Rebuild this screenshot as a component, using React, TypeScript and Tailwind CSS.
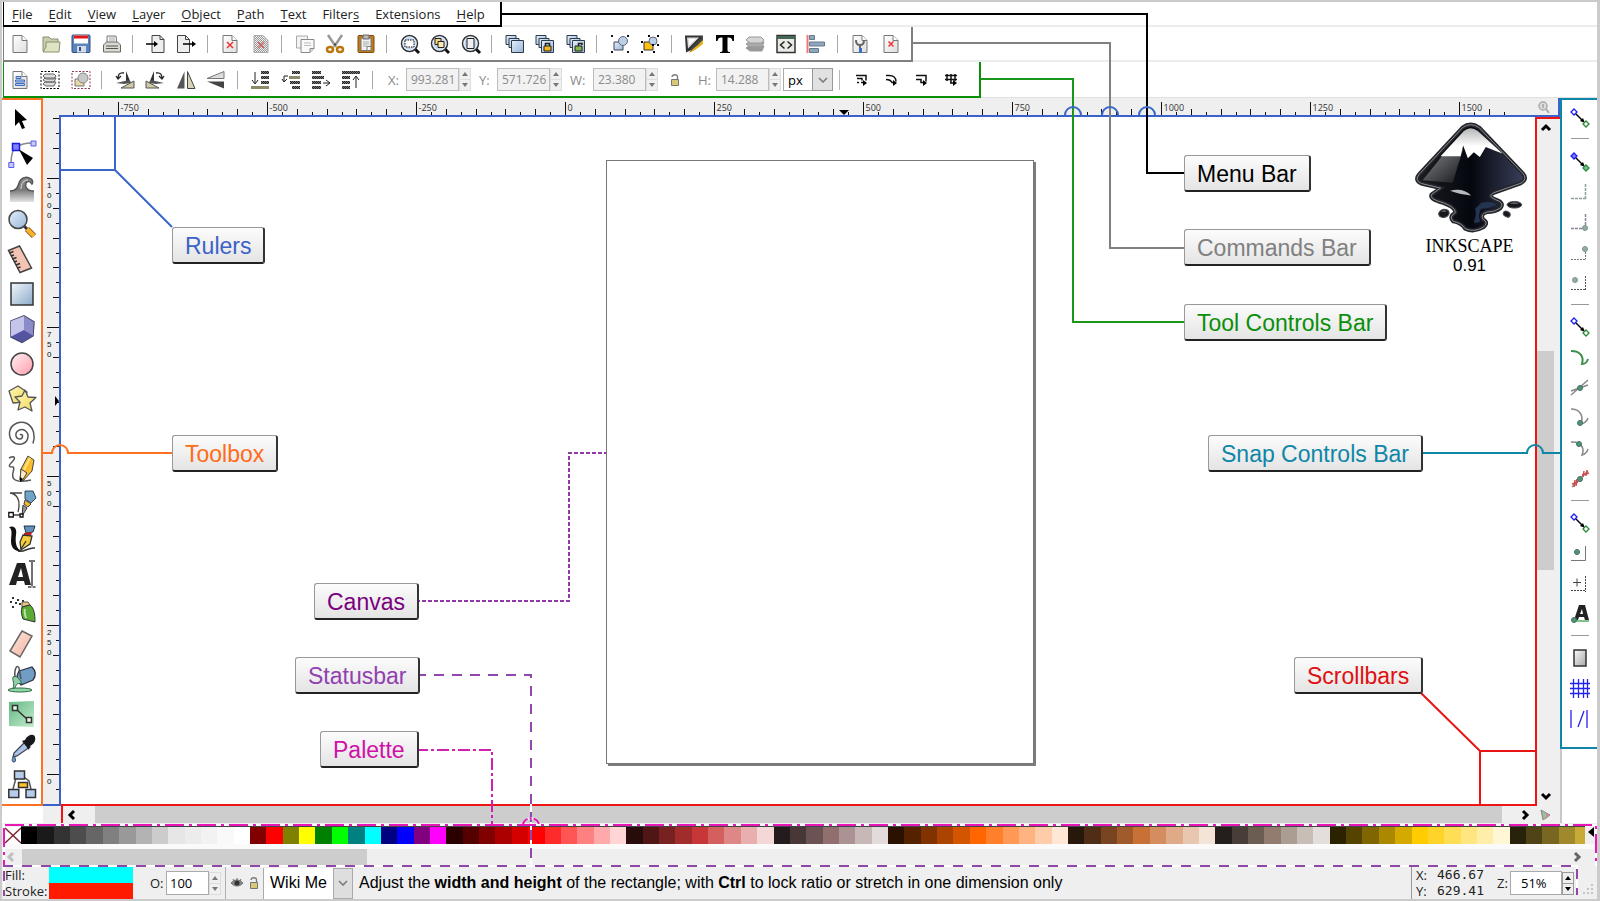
import type { ReactNode } from "react";

const UI = "font-['Open_Sans','Noto_Sans',sans-serif]";
const ARIAL = "font-['Liberation_Sans',Arial,sans-serif]";

const MENU = [
  ["", "F", "ile"],
  ["", "E", "dit"],
  ["", "V", "iew"],
  ["", "L", "ayer"],
  ["", "O", "bject"],
  ["", "P", "ath"],
  ["", "T", "ext"],
  ["Filter", "s", ""],
  ["Exte", "n", "sions"],
  ["", "H", "elp"],
];

const PALETTE =
  "000000 1a1a1a 333333 4d4d4d 666666 808080 999999 b3b3b3 cccccc e6e6e6 ececec f2f2f2 f9f9f9 ffffff " +
  "800000 ff0000 808000 ffff00 008000 00ff00 008080 00ffff 000080 0000ff 800080 ff00ff " +
  "2b0000 550000 800000 aa0000 d40000 ff0000 ff2a2a ff5555 ff8080 ffaaaa ffd5d5 " +
  "280b0b 501616 782121 a02c2c c83737 d35f5f de8787 e9afaf f4d7d7 " +
  "241c1c 483737 6c5353 916f6f ac9393 c8b7b7 e3dbdb " +
  "2b1100 552200 803300 aa4400 d45500 ff6600 ff7f2a ff9955 ffb380 ffccaa ffe6d5 " +
  "28170b 502d16 784421 a05a2c c87137 d38d5f deaa87 e9c6af f4e3d7 " +
  "241f1c 483e37 6c5d53 917c6f ac9d93 c8beb7 e3dedb " +
  "2b2200 554400 806600 aa8800 d4aa00 ffcc00 ffd42a ffdd55 ffe680 ffeeaa fff6d5 " +
  "28220b 504416 786721 a0892c";

/* ---- shared drawing bits ---- */

const page = (
  <path d="M3 1.500h9l5 5v12H3z" fill="url(#paper)" stroke="#777" />
);
const pageFold = <path d="M12 1.500v5h5" fill="#fff" stroke="#777" />;
const lens = (
  <>
    <path d="M14 14l5 5" stroke="#111" strokeWidth="3" />
    <circle cx="9.500" cy="9.500" r="8" fill="#c3d6ee" stroke="#333" strokeWidth="1.500" />
    <circle cx="9.500" cy="9.500" r="6.500" fill="none" stroke="#e8f0fa" />
  </>
);
const clones = (
  <g fill="url(#blue)" stroke="#2c3a4a">
    <path d="M1 1.500h10v9H1z" />
    <path d="M4 4.500h10v9H4z" />
    <path d="M6.500 6.500h12v12h-12z" />
  </g>
);
const handles = (
  <path
    d="M1 1h2v2H1zM17 1h2v2h-2zM1 17h2v2H1zM17 17h2v2h-2z"
    fill="#111"
  />
);

const COMMANDS: [string, ReactNode][][] = [
  [
    ["New", <>{page}{pageFold}</>],
    ["Open", (
      <>
        <path d="M2 17V3h6l2 2h7v12z" fill="#c9cfae" stroke="#8b9070" />
        <path d="M5 8h14l-1 10H2l3-5z" fill="#dde3c3" stroke="#8b9070" />
      </>
    )],
    ["Save", (
      <>
        <rect x="1" y="1" width="18" height="17.500" rx="1" fill="#5b84bd" stroke="#2c4d86" />
        <path d="M3 1.500h14v8H3z" fill="#fff" />
        <path d="M3 1.500h14v3H3z" fill="#e01818" />
        <path d="M6 12h9v6.500H6z" fill="#d5dce6" />
        <path d="M8 13h2v4H8z" fill="#2c4d86" />
      </>
    )],
    ["Print", (
      <>
        <path d="M5 10V2h9l1 8z" fill="#f5f5f5" stroke="#777" />
        <path d="M7 4h6M7 6h6" stroke="#aaa" />
        <path d="M1.500 11l3-3h11l3 3v7h-17z" fill="#d9d9d2" stroke="#666" />
        <path d="M4 12h12M4 14.500h12" stroke="#555" />
      </>
    )],
  ],
  [
    ["Import", (
      <>
        <path d="M6 1.500h8l4 4v13H6z" fill="#eee" stroke="#444" />
        <path d="M14 1.500v4h4" fill="none" stroke="#444" />
        <path d="M0 10h9" stroke="#000" strokeWidth="1.500" />
        <path d="M8 7l4 3-4 3z" />
      </>
    )],
    ["Export", (
      <>
        <path d="M1.500 1.500h8l4 4v13h-12z" fill="#eee" stroke="#444" />
        <path d="M9.500 1.500v4h4" fill="none" stroke="#444" />
        <path d="M7 10h10" stroke="#000" strokeWidth="1.500" />
        <path d="M16 7l4 3-4 3z" />
      </>
    )],
  ],
  [
    ["Undo", (
      <>
        {page}{pageFold}
        <path d="M7 8l6 6M13 8l-6 6" stroke="#e33" strokeWidth="1.500" />
      </>
    )],
    ["Redo", (
      <>
        <path d="M3 1.500h9l5 5v12H3z" fill="url(#dither)" stroke="#aaa" />
        <path d="M7 8l6 6M13 8l-6 6" stroke="#c66" strokeWidth="1.500" />
      </>
    )],
  ],
  [
    ["Copy", (
      <>
        <path d="M1.500 2h11v12h-11z" fill="#f4f4f4" stroke="#aaa" />
        <path d="M6 5.500h13v9l-4 4H6z" fill="#fafafa" stroke="#888" />
        <path d="M9 9h7M9 11.500h7" stroke="#bbb" />
        <path d="M15 18.500v-4h4" fill="#ddd" stroke="#888" />
      </>
    )],
    ["Cut", (
      <>
        <path d="M3 1l8 12M17 1L9 13" stroke="#999" strokeWidth="2.500" />
        <circle cx="10" cy="10.500" r="1" fill="#333" />
        <g fill="none" stroke="#b9770e" strokeWidth="2.500">
          <ellipse cx="5" cy="15.500" rx="3" ry="2.500" />
          <ellipse cx="15" cy="15.500" rx="3" ry="2.500" />
        </g>
      </>
    )],
    ["Paste", (
      <>
        <rect x="2" y="1.500" width="16" height="17" rx="1" fill="#c07c1c" stroke="#7d4d0b" />
        <path d="M5 4h10v12.500H5z" fill="#f2f2f2" stroke="#777" />
        <path d="M7 1h6v4H7z" fill="#bbb" stroke="#666" />
        <path d="M7 8h6M7 10h6M7 12h4" stroke="#aaa" />
        <path d="M11 16.500v-4h4" fill="#fff" stroke="#777" />
      </>
    )],
  ],
  [
    ["Zoom selection", (
      <>
        {lens}
        <rect x="5" y="6" width="9" height="7" fill="#fff" stroke="#111" strokeDasharray="1.500 1" />
      </>
    )],
    ["Zoom drawing", (
      <>
        {lens}
        <path d="M5 4.500h6v6H5z" fill="#f7d77a" stroke="#222" />
        <path d="M8 7.500h6v6H8z" fill="#fbe9b0" stroke="#222" />
      </>
    )],
    ["Zoom page", (
      <>
        {lens}
        <path d="M6 4.500h7v10H6z" fill="#eef0f2" stroke="#222" />
      </>
    )],
  ],
  [
    ["Duplicate", clones],
    ["Clone", (
      <>
        {clones}
        <path d="M9 12h7v5H9z" fill="#f4b619" stroke="#222" />
        <path d="M10.500 12v-2.500h4V12" fill="none" stroke="#222" strokeWidth="1.500" />
      </>
    )],
    ["Unlink clone", (
      <>
        {clones}
        <path d="M9 12h7v5H9z" fill="#86b548" stroke="#222" />
        <path d="M12.500 12V9.500h3.500v1.500" fill="none" stroke="#222" strokeWidth="1.500" />
      </>
    )],
  ],
  [
    ["Group", (
      <>
        {handles}
        <path d="M4 8h9v8H4z" fill="url(#blue)" stroke="#445" />
        <circle cx="13" cy="7" r="4.500" fill="#b9cfe8" stroke="#667" />
      </>
    )],
    ["Ungroup", (
      <>
        <path d="M4 8h9v8H4z" fill="#ffc20e" stroke="#333" />
        <circle cx="13" cy="7" r="4" fill="#b9cfe8" stroke="#667" />
        <path d="M1 7h2v2H1zM8 1h2v2H8zM17 1h2v2h-2zM1 17h2v2H1zM12 10h2v2h-2zM17 10h2v2h-2zM13 17h2v2h-2z" />
      </>
    )],
  ],
  [
    ["Fill and stroke", (
      <>
        <path d="M1 1.500h18L16 12 2 18.500z" fill="#333" />
        <path d="M3 3.500h12L4 14.500z" fill="#ddd" />
        <path d="M5 5h7L5 11z" fill="#fff" />
        <path d="M19 4v6l-8 6-6 3 3-5 6-3z" fill="#e9b320" />
        <path d="M19 2v4L9 15l-3 3 2-5z" fill="#444" />
      </>
    )],
    ["Text and font", (
      <path d="M1 1h18v6h-1.500c-.5-2.500-1.500-3.500-4-3.500h-1V16c0 1.500.5 2 2.500 2v1H5v-1c2 0 2.500-.5 2.500-2V3.500h-1C4 3.500 3 4.500 2.500 7H1z" />
    )],
    ["Layers", (
      <g stroke="#999">
        <path d="M4 12h15l-2 5H5l-4-3z" fill="#999" />
        <path d="M4 8h15l-2 5H5l-4-3z" fill="#aaa" />
        <path d="M4 3h12l3 3-2 3H5L1 6z" fill="#d5d5d5" />
      </g>
    )],
    ["XML editor", (
      <>
        <path d="M1 1.500h18v17H1z" fill="#e9ebe6" stroke="#333" strokeWidth="1.500" />
        <path d="M1 2h18v3H1z" fill="#465" />
        <path d="M8.500 7.500L4.500 11l4 3.500M11.500 7.500l4 3.500-4 3.500" fill="none" stroke="#222" strokeWidth="1.500" />
      </>
    )],
    ["Align and distribute", (
      <>
        <path d="M1.500 1v18" stroke="#e77" strokeWidth="2" />
        <g fill="#8fa6bd" stroke="#66788c">
          <path d="M3.500 1.500h5v4h-5zM3.500 8h15v4h-15zM3.500 14.500h9v4h-9z" />
        </g>
      </>
    )],
  ],
  [
    ["Preferences", (
      <>
        {page}{pageFold}
        <path d="M6 6c0 5 2 5 4 5s4 0 4-5M10 11v4" fill="none" stroke="#666" strokeWidth="2" />
        <path d="M9 14h3v5H9z" fill="#3a6fc4" />
      </>
    )],
    ["Document properties", (
      <>
        {page}{pageFold}
        <path d="M7.500 7.500l5 5M12.500 7.500l-5 5" stroke="#e33" strokeWidth="1.500" />
      </>
    )],
  ],
];

const bars = (d: string, tone = "url(#hatch)") => (
  <path d={d} stroke={tone} strokeWidth="3" />
);

const CONTROLS: [string, ReactNode][][] = [
  [
    ["Select all", (
      <>
        {page}{pageFold}
        <path d="M6 6.500h5v2H6zM5.500 10h9v2h-9zM5.500 13.500h9v2h-9z" fill="#b7cdf0" stroke="#3f6dbb" />
      </>
    )],
    ["Select all in layers", (
      <>
        <rect x="1" y="1.500" width="18" height="17" fill="none" stroke="#000" strokeDasharray="2 1.500" />
        <g fill="#ddd" stroke="#666"><path d="M5 12h11l-2 4H6l-3-2zM5 8h11l-2 4H6l-3-2zM5 4h9l2 2-2 3H6L3 6z" /></g>
      </>
    )],
    ["Deselect", (
      <>
        <rect x="1" y="1.500" width="18" height="17" fill="none" stroke="#8d3a4a" strokeDasharray="2 1.500" />
        <path d="M4 9h9v7H4z" fill="#e6d9a8" stroke="#777" />
        <circle cx="12" cy="8" r="5" fill="#c6cac8" stroke="#888" />
      </>
    )],
  ],
  [
    ["Rotate left", (
      <>
        <path d="M11 1l4 10h-4z" fill="#333" />
        <path d="M1 13l13-3 3 3-8 1z" fill="#555" />
        <path d="M6 18l13-7v7z" fill="#cfc9a6" stroke="#555" />
        <path d="M9 3C4 2 3 5 3 9M1 6l2 3 3-3" fill="none" stroke="#222" strokeWidth="1.300" />
      </>
    )],
    ["Rotate right", (
      <>
        <path d="M9 1L5 11h4z" fill="#333" />
        <path d="M19 13L6 10l-3 3 8 1z" fill="#555" />
        <path d="M14 18L1 11v7z" fill="#cfc9a6" stroke="#555" />
        <path d="M11 3c5-1 6 2 6 6M19 6l-2 3-3-3" fill="none" stroke="#222" strokeWidth="1.300" />
      </>
    )],
    ["Flip horizontal", (
      <>
        <path d="M8.500 1.500v17H1z" fill="#555" />
        <path d="M11.500 1.500v17H19z" fill="#d8d3b8" stroke="#444" />
      </>
    )],
    ["Flip vertical", (
      <>
        <path d="M18 1.500v7H1z" fill="#ddd" stroke="#777" />
        <path d="M18 18.500v-7H1z" fill="#444" />
      </>
    )],
  ],
  [
    ["Lower to bottom", (
      <>
        {bars("M11 2.500h8M11 7.500h8M11 12.500h8")}
        {bars("M1 17.500h18", "#8d8868")}
        <path d="M5 2v11M2 10l3 4 3-4" fill="none" stroke="#222" />
      </>
    )],
    ["Lower", (
      <>
        {bars("M11 2.500h8M9 12.500h10M11 17.500h8")}
        {bars("M8 7.500h11", "#8d8868")}
        <path d="M7 6H3v6M1 9l2 3 3-3" fill="none" stroke="#222" />
      </>
    )],
    ["Raise", (
      <>
        {bars("M1 2.500h9M1 7.500h12M1 12.500h9M1 17.500h9")}
        <path d="M12 13h7M15 10l4 3-4 3" fill="none" stroke="#222" />
      </>
    )],
    ["Raise to top", (
      <>
        {bars("M1 2.500h18M1 7.500h8M1 12.500h8M1 17.500h8")}
        <path d="M15 18V7M12 10l3-4 3 4" fill="none" stroke="#222" />
      </>
    )],
  ],
];

const affect = (d: string, tip: string) => (
  <>
    <path d={d} fill="none" stroke="#111" strokeWidth="1.500" />
    <path d={tip} />
  </>
);
const AFFECT: [string, ReactNode][] = [
  ["Scale stroke width", affect("M5 5.500h10v5M6 8.500h5v2M6 12.500h2M10 12.500h3", "M12 10l4 3-4 3z")],
  ["Scale rounded corners", affect("M5 5.500h3c5 0 7 3 7 6M5 9.500c3 0 5 1 6 3h3", "M12 10l4 3-4 3z")],
  ["Move gradients", affect("M5 5.500h10v6M5 9.500h5v3h4", "M12 10l4 3-4 3z")],
  ["Move patterns", affect("M4 5.500h12M4 9.500h12M6 4v7M10 4v9M14 4v7M9 13h5", "M12 10l4 3-4 3z")],
];

const TOOLS: [string, ReactNode][] = [
  ["Selector", <path d="M7 4l12 11-5 1 3 7-3 1-3-7-4 4z" />],
  ["Node editor", (
    <>
      <path d="M3 24c0-9 1-14 5-17 5-3 11-4 16-4" fill="none" stroke="#888" strokeWidth="1.500" />
      <path d="M4.500 3.500h7v7h-7z" fill="#8080ff" stroke="#1a1ae0" strokeWidth="1.500" />
      <path d="M23 1h5v5h-5zM.8 22.500h5v5h-5z" fill="#c8c8ff" stroke="#5b5bf0" />
      <path d="M11 9.500l14 8.500-6 7z" />
    </>
  )],
  ["Tweak", (
    <>
      <path d="M2 27V16c7 0 8-5 9-8 2-6 8-7 12-4 2 1 2 4 1 5-2-3-5-3-6-1-1 3 0 8 8 8v11z" fill="url(#wave)" />
      <path d="M2 16c7 0 8-5 9-8 2-6 8-7 12-4 2 1 2 4 1 5-2-3-5-3-6-1-1 3 0 8 8 8" fill="none" stroke="#555" strokeWidth="1.500" />
      <path d="M13 14c0-6 3-9 7-9" fill="none" stroke="#ddd" />
    </>
  )],
  ["Zoom", (
    <>
      <path d="M16 16l4 4" stroke="#333" strokeWidth="3" />
      <path d="M19 19l7 7" stroke="#8a5a10" strokeWidth="6" />
      <path d="M19 19l7 7" stroke="#f7b32b" strokeWidth="4" />
      <circle cx="10" cy="9.500" r="9" fill="url(#blue)" stroke="#444" strokeWidth="1.500" />
    </>
  )],
  ["Measure", (
    <>
      <path d="M.5 5.500L11.500 1l12 22L12 27.500z" fill="#f3c4b3" stroke="#444" strokeWidth="1.500" />
      <path d="M1.500 8l4-1.500M3 11l3-1M4.500 14l4-1.500M6 17l3-1M8 20l4-1.500M9.500 23l3-1" stroke="#333" strokeWidth="1.500" />
    </>
  )],
  ["Rectangle", <path d="M3 3h22v22H3z" fill="url(#blue2)" stroke="#333" strokeWidth="1.500" />],
  ["3D box", (
    <>
      <path d="M16 .8l10 6-1 14-11 6.500L3 22V6z" fill="#a6a6d8" stroke="#44446a" strokeWidth="1.500" />
      <path d="M16 1v14L3 21.500V6z" fill="#c5c5ec" />
      <path d="M16 15l9.500 5.500L14 27 3.500 21.500z" fill="#5454a0" />
      <path d="M16 1l9.500 6-.5 13.500L16 15z" fill="#8b8bc9" />
    </>
  )],
  ["Ellipse", <circle cx="14" cy="14" r="11" fill="url(#pink)" stroke="#444" strokeWidth="1.500" />],
  ["Star", (
    <g fill="url(#yellow)" stroke="#555" strokeWidth="1.300" strokeLinejoin="round">
      <path d="M1 6l9-5 9 6-3 10-11 1z" />
      <path d="M17 5l3 7 8 .5-6 5.500 2 8-7-4-7 3 2-8-5-5 7-1z" />
    </g>
  )],
  ["Spiral", (
    <path
      d="M12 15c1-1.500 3 0 2.500 2-.8 3-5.500 2.500-6.500-1-1-5 5-8 9-5.500 5.500 4 3 12-3.500 13.500C6 25.500 1 19 1.500 12.500 2.500 4 12 0 19 3.500c7 4 8.500 13 6 20"
      fill="none" stroke="#555" strokeWidth="1.500"
    />
  )],
  ["Pencil", (
    <>
      <path d="M1 3c6-3 7 0 3 4-5 5-2 5 1 5 3 1-3 8 1 12s12 2 17 1" fill="none" stroke="#555" strokeWidth="1.500" />
      <path d="M20 1l6 4-2 11-9 10-3-1 1-11z" fill="#f8bd28" stroke="#444" />
      <path d="M13 14l6 4-5 8-2-1z" fill="#fbe8c4" stroke="#444" />
      <path d="M22 3l-6 12" stroke="#fce38a" strokeWidth="2" />
      <path d="M12 22l3 2-3 3z" />
    </>
  )],
  ["Bezier", (
    <>
      <path d="M2 3h12M2 3c7 1 11 7 8 19M5 25h9" fill="none" stroke="#444" strokeWidth="1.300" />
      <path d="M17 1h8l3 7-5 5-6-4z" fill="#6fa3c8" stroke="#345" />
      <path d="M17 10l6 4-3 3-4-3z" fill="#f4b92c" stroke="#444" />
      <path d="M15 15l4 3-5 8z" fill="#999" stroke="#333" />
      <path d="M.8 22.500h4.500V27H.8zM12 24h3v3h-3z" fill="#fff" stroke="#111" strokeWidth="1.300" />
    </>
  )],
  ["Calligraphy", (
    <>
      <path d="M1 2c6-2 8 2 7 8-1 7 0 14 6 16-7 1-11-3-11-10C3 10 5 5 1 2z" fill="#111" />
      <path d="M10 26c6 2 10-4 17-3" fill="none" stroke="#333" strokeWidth="1.500" />
      <path d="M16 1h11l-2 6-7 1z" fill="#5f93bd" stroke="#234" />
      <path d="M16 8l8-1-1 4-7-1z" fill="#c02020" />
      <path d="M15 10l9 1-2 8-9 6-1-8z" fill="#f7cc3c" stroke="#333" strokeWidth="1.300" />
      <path d="M13 24l5-8" stroke="#333" strokeWidth="1.300" />
    </>
  )],
  ["Text", (
    <>
      <path fillRule="evenodd" d="M1 25L9 3h8l6 22h-6l-1-4H9l-1 4zM10 17h5l-2-9z" fill="#222" />
      <path d="M21 1h3M24 1h3M24 2v24M20 27h3.500M24.500 27h3" stroke="#444" strokeWidth="1.500" />
    </>
  )],
  ["Spray", (
    <>
      <path d="M4 2h2v2H4zM2 6h2v2H2zM7 7h2v2H7zM4 11h2v2H4zM9 4h2v2H9zM11 8h2v2h-2zM14 5h2v2h-2z" fill="#333" />
      <path d="M14 7h6l2 3-8 2z" fill="#f1c27a" stroke="#555" />
      <path d="M14 12l8-2c4 3 5 9 5 17l-12-3c-2-5-2-9-1-12z" fill="#5aab36" stroke="#333" />
      <path d="M17 14c-1 3 0 6 1 9" stroke="#b7e59e" strokeWidth="2" fill="none" />
    </>
  )],
  ["Eraser", <path d="M14 1l10 5-12 21L2 21z" fill="url(#peach)" stroke="#666" strokeWidth="1.500" />],
  ["Bucket", (
    <>
      <path d="M11 6L24 2c4 4 4 9 1 13l-12 5C9 16 8 11 11 6z" fill="#6f9dc4" stroke="#334" strokeWidth="1.300" />
      <path d="M5 12c2-2 6 0 9 7-6-2-6 2-7 4H5c2-4-1-8 0-11z" fill="#8fd0a8" stroke="#364" />
      <ellipse cx="12" cy="25" rx="12" ry="2" fill="#8fd9a8" stroke="#364" />
      <path d="M7 12C6 4 9-1 11 3l2 11" fill="none" stroke="#555" strokeWidth="1.500" />
    </>
  )],
  ["Gradient", (
    <>
      <path d="M1 2l25-1v26L1 26z" fill="url(#green)" />
      <path d="M8 9l12 11" stroke="#333" strokeWidth="1.500" />
      <path d="M4.500 5.500h5v5h-5zM18.500 17.500h5v5h-5z" fill="#e5f5ea" stroke="#333" strokeWidth="1.500" />
    </>
  )],
  ["Dropper", (
    <>
      <path d="M17 7l5 5L9 21l-4 1 1-4z" fill="#a9c4e4" stroke="#445" strokeWidth="1.300" />
      <path d="M14 6l3-1c2-5 9-7 10-3s-1 7-5 9l-1 4z" fill="#16181c" />
      <path d="M6 21c-3 4-2 6 0 6s2-3 0-6z" fill="#6fa0d6" stroke="#345" />
    </>
  )],
  ["Connector", (
    <>
      <path d="M8 8L5 19M16 7l5 4 2 8" fill="none" stroke="#555" strokeWidth="1.500" />
      <g fill="#b5cdea" stroke="#333" strokeWidth="1.500">
        <path d="M6.500 1h10v8h-10zM.8 19.500h10v8H.8zM18 19.500h9.500v8H18z" />
        <path d="M10.500 12.500h9v5h-9z" fill="#ffc524" />
      </g>
    </>
  )],
];

const snap = (faded: boolean) => (
  <>
    <path d="M5 5l8 8" stroke="#000" strokeWidth="1.500" />
    <path d="M15 15l-5-2 3-3z" />
    <path d="M4 1l3 3-3 3-3-3z" fill={faded ? "#8080ff" : "#fff"} stroke="#2020f0" strokeWidth="1.300" />
    <path d="M16 13l3 3-3 3-3-3z" fill={faded ? "#7fc09a" : "#fff"} stroke="#2c8a3a" strokeWidth="1.300" />
  </>
);
const dot = (x: number, y: number) => (
  <circle cx={x} cy={y} r="2.500" fill="#4a9a66" stroke="#4d6a78" />
);
const paleDot = (x: number, y: number) => (
  <circle cx={x} cy={y} r="2.500" fill="#8fb09c" stroke="#7f948c" />
);

const SNAPS: [string, ReactNode][][] = [
  [["Enable snapping", snap(false)]],
  [
    ["Snap bounding boxes", snap(true)],
    ["Snap to edges", <path d="M15.500 2v15.500M1 16.500h15" stroke="#8aa394" strokeWidth="1.500" strokeDasharray="3 1" />],
    ["Snap to corners", <><path d="M15.500 1v15M1 15.500h15" stroke="#889" strokeWidth="1.500" strokeDasharray="3 1" />{paleDot(15, 15)}</>],
    ["Snap edge midpoints", <><path d="M15.500 6v10.500M1 16.500h15" stroke="#777" strokeDasharray="2 1" />{paleDot(15, 6)}</>],
    ["Snap centers", <><path d="M15.500 3v14M1 16.500h15" stroke="#555" strokeDasharray="2 1" />{paleDot(5, 7)}</>],
  ],
  [
    ["Snap nodes", snap(false)],
    ["Snap to paths", <path d="M1 3c10 0 13 6 11 13 4 0 5-2 6-5" fill="none" stroke="#3f8f4c" strokeWidth="2" />],
    ["Snap intersections", <><path d="M1 17L18 2M1 13l17-6" stroke="#888" strokeWidth="1.500" />{dot(10, 10)}</>],
    ["Snap cusp nodes", <><path d="M1 1c9 0 13 7 10 15 4-1 6-3 7-6" fill="none" stroke="#888" strokeWidth="1.500" />{dot(10, 15)}</>],
    ["Snap smooth nodes", <><path d="M1 3c10-1 14 6 11 13 4-1 5-3 6-6" fill="none" stroke="#888" strokeWidth="1.500" />{dot(9, 5)}</>],
    ["Snap midpoints", <><path d="M2 18L18 2" stroke="#888" strokeWidth="1.500" /><path d="M2 15l6-2M4 18l1-7M6 17l1-7M12 6l7-2M13 8l1-6M16 7l1-6" stroke="#d04848" strokeWidth="1.500" />{dot(10, 10)}</>],
  ],
  [
    ["Snap others", snap(false)],
    ["Snap object centers", <><path d="M15.500 2v14.500H1" fill="none" stroke="#777" />{dot(7, 8)}</>],
    ["Snap rotation centers", <><path d="M15.500 2v16M1 16.500h15" stroke="#444" strokeDasharray="2 1" /><path d="M3 8.500h8M7 4.500v8" stroke="#444" /></>],
    ["Snap text baseline", <><path d="M2 17h17" stroke="#7fc48c" strokeWidth="2" /><path fillRule="evenodd" d="M4 16L9 1h6l4 15h-4l-1-3H9l-1 3zM10 10h3l-1-5z" fill="#222" />{dot(4, 16)}</>],
  ],
  [
    ["Snap page border", <path d="M4 2h12v16H4z" fill="url(#paper2)" stroke="#333" strokeWidth="1.500" />],
    ["Snap grids", <path d="M0 4.500h20M0 9.500h20M0 14.500h20M3.500 0v19M8.500 0v19M13.500 0v19M17.500 0v19" stroke="#2222ee" strokeWidth="1.300" />],
    ["Snap guides", <path d="M1 1v18M17 1v18M8 18l6-16" stroke="#2222ee" strokeWidth="1.300" />],
  ],
];

/* ---- small widgets ---- */

function Icon({ label, size = 20, children }: { label: string; size?: number; children: ReactNode }) {
  return (
    <button type="button" aria-label={label} className="block shrink-0">
      <svg width={size} height={size} viewBox={`0 0 ${size} ${size}`} fill="#000" className="block overflow-visible">
        {children}
      </svg>
    </button>
  );
}

function IconRow({ groups }: { groups: [string, ReactNode][][] }) {
  return groups.map((group, i) => [
    i > 0 && <span key={`sep${i}`} className="h-[18px] w-[3px] shrink-0 border-l border-[#a8a8a8]" />,
    ...group.map(([label, art]) => (
      <Icon key={label} label={label}>{art}</Icon>
    )),
  ]);
}

function Spin({ dark = false }: { dark?: boolean }) {
  const tone = dark ? "bg-[#eee] border-[#999] text-black" : "bg-[#f0f0f0] border-[#ddd] text-[#777]";
  return (
    <span className={`flex h-[23px] w-[12px] shrink-0 flex-col border ${tone}`}>
      <button type="button" aria-label="Increase" className="flex flex-1 items-center justify-center border-b border-inherit">
        <svg width="6" height="4"><path d="M0 4l3-4 3 4z" fill="currentColor" /></svg>
      </button>
      <button type="button" aria-label="Decrease" className="flex flex-1 items-center justify-center">
        <svg width="6" height="4"><path d="M0 0l3 4 3-4z" fill="currentColor" /></svg>
      </button>
    </span>
  );
}

function Coord({ label, value, wide = false }: { label: string; value: string; wide?: boolean }) {
  return (
    <label className="flex items-center text-[13px] text-[#8a8a8a]">
      <span className={wide ? "w-[23px]" : "w-[18px]"}>{label}:</span>
      <input
        defaultValue={value}
        className="h-[23px] w-[53px] border border-[#bdbdbd] bg-[#f2f2f2] pl-1 text-[12px] text-[#8a8a8a]"
      />
      <Spin />
    </label>
  );
}

function Lock() {
  return (
    <svg width="10" height="12" viewBox="0 0 10 12" className="block">
      <path d="M1.500 5.500h7v6h-7z" fill="#d8c978" stroke="#777" />
      <path d="M2 3c0-3 5.500-3 5.500 0v3" fill="none" stroke="#777" strokeWidth="1.300" />
    </svg>
  );
}

function Arrow({ dir, tone = "#000" }: { dir: "up" | "down" | "left" | "right"; tone?: string }) {
  const d = {
    up: "M2 8l4-4 4 4",
    down: "M2 4l4 4 4-4",
    left: "M8 2L4 6l4 4",
    right: "M4 2l4 4-4 4",
  }[dir];
  return (
    <button type="button" aria-label={`Scroll ${dir}`} className="block shrink-0">
      <svg width="12" height="12" className="block">
        <path d={d} fill="none" stroke={tone} strokeWidth="3" />
      </svg>
    </button>
  );
}

/* ---- rulers: 250px of document = 149px of screen ---- */

const STEP = 14.9;

function HRuler() {
  const zero = 506;
  const ticks = Array.from({ length: 99 }, (_, i) => i - 33);
  return (
    <svg className={`block h-[17px] w-full overflow-hidden text-[9px] ${UI}`}>
      {ticks.filter((k) => k < 64).map((k) => {
        const x = Math.round(zero + k * STEP) + 0.5;
        const major = k % 10 === 0;
        return (
          <g key={k}>
            <path d={`M${x} ${major ? 4 : k % 2 ? 14 : 11}V17`} stroke="#111" />
            {major && <text x={x + 2} y="13" fill="#333">{k * 25}</text>}
          </g>
        );
      })}
      <path d="M780 12h10l-5 5z" />
    </svg>
  );
}

function VRuler() {
  const zero = 657;
  const ticks = Array.from({ length: 48 }, (_, i) => i - 3);
  return (
    <svg className={`block h-full w-[16px] text-[8px] ${ARIAL}`}>
      {ticks.map((k) => {
        const y = Math.round(zero - k * STEP) + 0.5;
        const major = k % 10 === 0;
        return (
          <g key={k}>
            <path d={`M${major ? 4 : k % 2 ? 13 : 10} ${y}H16`} stroke="#111" />
            {major &&
              String(k * 25).split("").map((c, i) => (
                <text key={i} x="4" y={y + 9 + i * 10} fill="#111">{c}</text>
              ))}
          </g>
        );
      })}
      <path d="M12 279v10l4-5z" />
    </svg>
  );
}

/* ---- annotations ---- */

const LABELS = [
  ["Menu Bar", "left-[1184px] top-[155px] text-black"],
  ["Commands Bar", "left-[1184px] top-[229px] text-[#808080]"],
  ["Tool Controls Bar", "left-[1184px] top-[304px] text-[#0a8f0a]"],
  ["Snap Controls Bar", "left-[1208px] top-[435px] text-[#0f86a8]"],
  ["Scrollbars", "left-[1294px] top-[657px] text-[#e01010]"],
  ["Rulers", "left-[172px] top-[227px] text-[#3a62c8]"],
  ["Toolbox", "left-[172px] top-[435px] text-[#ff6c1a]"],
  ["Canvas", "left-[314px] top-[583px] text-[#7a0080]"],
  ["Statusbar", "left-[295px] top-[657px] text-[#9140b0]"],
  ["Palette", "left-[320px] top-[731px] text-[#d010a8]"],
];

function Connectors() {
  return (
    <svg className="absolute inset-0 h-full w-full" fill="none" strokeWidth="2">
      <path d="M502 14h645v159h37" stroke="#000" />
      <path d="M913 43h197v205h74" stroke="#808080" />
      <path d="M981 79h92v243h111" stroke="#1a961a" />
      <g stroke="#3a66cc">
        <path d="M1065 115a8 8 0 0 1 16 0M1102 115a8 8 0 0 1 16 0M1139 115a8 8 0 0 1 16 0" />
        <path d="M61 170h54V117M115 170l57 57" />
      </g>
      <path d="M43 453h9a8 8 0 0 1 16 0h104" stroke="#ff7020" />
      <path d="M1418 453h109a8 8 0 0 1 16 0h17" stroke="#0f86a8" />
      <path d="M1421 693l59 58h55M1480 751v53" stroke="#e81414" />
      <path d="M416 601h153V453h37" stroke="#9238a8" strokeDasharray="4 2" />
      <path d="M416 750h76v74" stroke="#d020b0" strokeDasharray="12 3 3 3" />
      <path d="M418 675h113v191" stroke="#fff" />
      <path d="M416 675h115v191" stroke="#9048b0" strokeDasharray="10 8" />
      <path d="M523 825c1-9 15-9 16 0" stroke="#fff" />
      <path d="M523 825c1-9 15-9 16 0" stroke="#e010b0" strokeDasharray="8 2 2 2" />
      <path d="M3 825h1593v41M4 825v41" stroke="#fff" />
      <path d="M5 825h1591v41M4 828v38" stroke="#e818b8" strokeDasharray="19 5 3 5" />
      <path d="M3 866h1574v29M4 866v30" stroke="#fff" />
      <path d="M3 866h1574v29M4 871v25" stroke="#9048a8" strokeDasharray="10 9" />
    </svg>
  );
}

const DROP =
  "M188 36Q212 18 238 36L368 172Q386 190 364 203L282 232Q262 242 286 252Q316 262 302 278Q286 290 262 290Q240 296 250 312Q268 322 250 336Q222 352 196 340Q184 322 160 318Q146 304 166 292Q168 276 130 262Q84 250 96 236L122 218L64 204Q42 194 58 176Z";

function Logo() {
  return (
    <div className="absolute left-[1415px] top-[122px] flex w-[113px] flex-col items-center text-black">
      <svg width="113" height="112" viewBox="45 20 340 335" role="img" aria-label="Inkscape logo">
        <path d={DROP} fill="url(#ink)" stroke="#25262b" strokeWidth="12" />
        <path d={DROP} fill="none" stroke="#8a8d94" strokeWidth="3" />
        <path d="M126 122L190 100 158 202 68 194z" fill="url(#shine)" />
        <path d="M192 46Q212 30 234 46L308 114 282 104 258 94 240 124 222 110 204 128 190 90 182 122 122 122Z" fill="url(#snow)" />
        <path d="M150 226q40-10 64 14-30-2-64-14z" fill="#b8babd" />
        <path d="M244 262q36-6 46 6-20 12-46 12-12 20-2 38-14 8-20 2 10-24 4-40z" fill="#233350" />
        <g fill="#16181c" stroke="#45484e" strokeWidth="3">
          <ellipse cx="344" cy="268" rx="22" ry="10" />
          <ellipse cx="132" cy="294" rx="16" ry="12" transform="rotate(-15 132 294)" />
          <ellipse cx="321" cy="296" rx="11" ry="8" transform="rotate(30 321 296)" />
        </g>
        <path d="M330 264q14-6 28 0zM124 288q10-5 16 0z" fill="#9a9ea6" />
      </svg>
      <span className="mt-[2px] pr-[4px] font-['Liberation_Serif',serif] text-[18px] leading-[20px]">INKSCAPE</span>
      <span className={`pr-[4px] text-[17px] leading-[20px] ${ARIAL}`}>0.91</span>
    </div>
  );
}

function Gradients() {
  const stops: [string, string, string][] = [
    ["paper", "#ffffff", "#dedede"],
    ["paper2", "#fafafa", "#a8a8a8"],
    ["blue", "#e4eefa", "#98b6d8"],
    ["blue2", "#f2f7fd", "#8cabc9"],
    ["pink", "#fff2f4", "#ff9cab"],
    ["yellow", "#fff8b8", "#f0d85c"],
    ["peach", "#fbe9e4", "#f5b09c"],
    ["green", "#62b880", "#c4ecd0"],
    ["shine", "#8a8c90", "#15161a"],
  ];
  return (
    <svg className="absolute h-0 w-0">
      <defs>
        {stops.map(([id, a, b]) => (
          <linearGradient key={id} id={id} x1="0" y1="0" x2="1" y2="1">
            <stop stopColor={a} />
            <stop offset="1" stopColor={b} />
          </linearGradient>
        ))}
        <linearGradient id="ink" x1="0" y1="0" x2="1" y2="0">
          <stop stopColor="#1c1d22" />
          <stop offset="0.5" stopColor="#05070f" />
          <stop offset="1" stopColor="#39405a" />
        </linearGradient>
        <linearGradient id="wave" x1="0" y1="0" x2="0" y2="1">
          <stop stopColor="#888" />
          <stop offset="0.5" stopColor="#777" />
          <stop offset="1" stopColor="#e4e4e4" />
        </linearGradient>
        <linearGradient id="snow" x1="0" y1="0" x2="0" y2="1">
          <stop stopColor="#b5b5b5" />
          <stop offset="0.6" stopColor="#fff" />
        </linearGradient>
        <pattern id="dither" width="2" height="2" patternUnits="userSpaceOnUse">
          <path d="M0 0h2v2H0z" fill="#eee" />
          <path d="M0 0h1v1H0zM1 1h1v1H1z" fill="#999" />
        </pattern>
        <pattern id="hatch" width="2" height="2" patternUnits="userSpaceOnUse">
          <path d="M0 0h2v2H0z" fill="#777" />
          <path d="M0 0h1v1H0zM1 1h1v1H1z" fill="#222" />
        </pattern>
      </defs>
    </svg>
  );
}

/* ---- page ---- */

export default function App() {
  return (
    <div className={`relative flex min-h-screen overflow-hidden bg-white text-[13px] leading-4 text-[#222] ${UI}`}>
      <Gradients />
      <div className="flex min-w-0 flex-1 flex-col border-2 border-r-[3px] border-[#cbcbcb]">
        <nav className="flex h-[25px] pl-px shadow-[inset_0_-2px_#ececec]">
          <div className="flex w-[499px] items-center gap-[16px] border-r-2 border-b-2 border-l border-black bg-white pt-px pl-2">
            {MENU.map(([pre, key, post]) => (
              <button key={pre + key + post} type="button" className="whitespace-nowrap">
                {pre}<u className="underline-offset-2">{key}</u>{post}
              </button>
            ))}
          </div>
        </nav>

        <div className="flex h-[35px] pl-px shadow-[inset_0_-2px_#ececec]">
          <div className="border-r-2 border-b-2 border-l border-[#808080] bg-white pr-[10px] pl-[6px]">
            <div className="flex h-full w-[891px] items-center justify-between">
              <IconRow groups={COMMANDS} />
            </div>
          </div>
        </div>

        <div className="flex h-[36px] pl-px shadow-[inset_0_-1px_#e0e0e0]">
          <div className="flex w-[978px] items-center border-r-2 border-b-2 border-l border-[#0a8f0a] bg-white pt-px pl-[6px]">
            <div className="flex w-[365px] shrink-0 items-center justify-between">
              <IconRow groups={CONTROLS} />
              <span className="h-[18px] w-[3px] border-l border-[#a8a8a8]" />
            </div>
            <div className="ml-[13px] flex items-center gap-[8px]">
              <Coord label="X" value="993.281" />
              <Coord label="Y" value="571.726" />
              <div className="flex items-center">
                <Coord label="W" value="23.380" wide />
                <button type="button" aria-label="Lock ratio" className="mr-[18px] ml-[12px]"><Lock /></button>
                <Coord label="H" value="14.288" />
              </div>
            </div>
            <div className="relative ml-[2px] h-[23px] w-[50px] shrink-0">
              <select aria-label="Unit" className="h-full w-full appearance-none border border-[#aaa] bg-white pl-1 text-black">
                <option>px</option>
              </select>
              <span className="pointer-events-none absolute top-0 right-0 flex h-full w-[21px] items-center justify-center border border-[#999] bg-[#e1e1e1]">
                <svg width="10" height="6"><path d="M1 1l4 4 4-4" fill="none" stroke="#777" strokeWidth="1.500" /></svg>
              </span>
            </div>
            <span className="ml-[6px] h-[20px] border-l border-[#b8b8b8]" />
            <div className="ml-[11px] flex gap-[10px]">
              {AFFECT.map(([label, art]) => (
                <Icon key={label} label={label}>{art}</Icon>
              ))}
            </div>
          </div>
        </div>

        <div className="flex flex-1">
          <aside className="flex w-[41px] shrink-0 flex-col">
            <div className="flex flex-1 flex-col items-center gap-[7px] border-t-2 border-r-2 border-b-2 border-[#ff7226] pt-[5px]">
              {TOOLS.map(([label, art]) => (
                <Icon key={label} label={label} size={28}>{art}</Icon>
              ))}
            </div>
            <div className="h-[17px]" />
          </aside>

          <main className="flex min-w-0 flex-1 flex-col bg-[#efefef]">
            <div className="flex h-[19px]">
              <div className="w-[16px]" />
              <div className="relative min-w-0 flex-1 border-r-2 border-b-2 border-[#3a62c8]">
                <HRuler />
                <svg width="12" height="12" className="absolute top-[3px] right-[8px]" fill="none" stroke="#aaa">
                  <circle cx="5" cy="5" r="4" fill="#ddd" strokeWidth="1.500" />
                  <path d="M8 8l3 4" strokeWidth="2" />
                  <path d="M5 3v4" stroke="#888" />
                </svg>
              </div>
            </div>
            <div className="flex flex-1">
              <div className="relative w-[18px] shrink-0 border-r-2 border-b-2 border-[#3a62c8]">
                <div className="absolute inset-0"><VRuler /></div>
              </div>
              <div className="relative flex-1 border-b-2 border-[#f01414] bg-white">
                <div className="absolute top-[43px] left-[545px] h-[604px] w-[428px] border border-[#777] bg-white shadow-[2px_2px_0_#7c7c7c]" />
              </div>
              <div className="flex w-[25px] shrink-0 flex-col border-t-2 border-l-2 border-[#f01414]">
                <div className="flex h-[232px] items-start justify-center pt-[3px] pr-[6px]"><Arrow dir="up" /></div>
                <div className="h-[219px] w-[17px] bg-[#cdcdcd]" />
                <div className="mt-auto flex justify-center pr-[6px] pb-[4px]"><Arrow dir="down" /></div>
              </div>
            </div>
            <div className="flex h-[17px] pl-[18px]">
              <div className="flex flex-1 items-center border-l-2 border-[#f01414] pl-[3px]">
                <Arrow dir="left" />
                <div className="ml-[17px] h-full flex-1 bg-[#cdcdcd]" />
                <div className="flex w-[35px] justify-end pr-[6px]"><Arrow dir="right" /></div>
              </div>
              <div className="flex w-[23px] items-center pl-[3px]">
                <svg width="12" height="12"><path d="M1 1l9 5-7 5z" fill="#9cbf9c" stroke="#888" /><path d="M6 4l4 2-4 4z" fill="#c98aa0" /></svg>
              </div>
            </div>
          </main>

          <aside className="flex w-[37px] shrink-0 flex-col">
            <div className="flex h-[651px] flex-col items-center border-t-2 border-b-2 border-l-2 border-[#0f86a8] pt-[8px]">
              <div className="flex h-[621px] shrink-0 flex-col items-center justify-between">
                {SNAPS.map((group, i) => [
                  i > 0 && <span key={`s${i}`} className="h-[3px] w-[18px] border-t border-[#999]" />,
                  ...group.map(([label, art]) => (
                    <Icon key={label} label={label}>{art}</Icon>
                  )),
                ])}
              </div>
            </div>
            <div className="flex-1 border-l-2 border-[#c8c8c8]" />
          </aside>
        </div>

        <section aria-label="Palette" className="flex flex-col bg-[#efefef]">
          <div className="mr-[12px] ml-[3px] flex h-[21px] pt-[4px]">
            <button type="button" aria-label="None" className="block w-[16px] shrink-0 bg-white">
              <svg width="16" height="17" className="block"><path d="M0 1l16 15M16 1L0 16" stroke="#7d2b35" strokeWidth="1.500" /></svg>
            </button>
            <div className="flex flex-1 shadow-[0_-1px_#444]">
              {PALETTE.split(" ").map((c, i) => (
                <button key={i} type="button" aria-label={`#${c}`} className="h-full grow-5 basis-0" style={{ backgroundColor: `#${c}` }} />
              ))}
              <button type="button" aria-label="#c8ab37" className="h-full grow-3 basis-0 bg-[#c8ab37]" />
            </div>
            <div className="-mr-[10px] flex w-[10px] pl-[3px]">
              <svg width="6" height="10"><path d="M6 0v10L0 5z" /></svg>
            </div>
          </div>
          <div className="h-[5px] bg-[#fafafa]" />
          <div className="flex h-[16px] items-center pr-[14px] pl-[3px]">
            <Arrow dir="left" tone="#c0c0c0" />
            <div className="ml-[5px] h-full w-[345px] bg-[#cdcdcd]" />
            <div className="ml-auto"><Arrow dir="right" tone="#666" /></div>
          </div>
        </section>

        <footer className="flex h-[34px] items-center bg-[#efefef] pt-[2px] pl-[3px]">
          <div className="flex h-full w-[128px] flex-col">
            <div className="flex flex-1 items-center"><span className="w-[44px]">Fill:</span><span className="h-full flex-1 bg-[#00ffff]" /></div>
            <div className="flex flex-1 items-center"><span className="w-[44px]">Stroke:</span><span className="h-full flex-1 bg-[#ff1a00]" /></div>
          </div>
          <label className="ml-[17px] flex items-center">
            <span className="w-[16px]">O:</span>
            <input defaultValue="100" className="h-[24px] w-[43px] border border-[#aaa] bg-white pl-[3px] text-black" />
          </label>
          <Spin />
          <span className="mx-[4px] h-full border-l border-[#b0b0b0]" />
          <button type="button" aria-label="Toggle layer visibility" className="ml-px">
            <svg width="12" height="12" className="block">
              <path d="M0 6c3-4 9-4 12 0-3 4-9 4-12 0z" fill="#888" stroke="#777" />
              <circle cx="6" cy="6" r="2.500" fill="#333" />
              <path d="M2 2l1 2M6 1v3M10 2L9 4" stroke="#666" />
            </svg>
          </button>
          <button type="button" aria-label="Lock layer" className="ml-[6px]"><Lock /></button>
          <div className={`relative ml-[4px] h-[31px] w-[90px] shrink-0 ${ARIAL}`}>
            <select aria-label="Layer" className="h-full w-full appearance-none border-l border-[#aaa] bg-white pl-[6px] text-[16px] text-black">
              <option>Wiki Me</option>
            </select>
            <span className="pointer-events-none absolute top-0 right-0 flex h-full w-[20px] items-center justify-center border border-[#aaa] bg-[#dedede]">
              <svg width="10" height="6"><path d="M1 1l4 4 4-4" fill="none" stroke="#777" strokeWidth="1.500" /></svg>
            </span>
          </div>
          <p className={`ml-[6px] flex-1 text-[16px] whitespace-nowrap text-black ${ARIAL}`}>
            Adjust the <b>width and height</b> of the rectangle; with <b>Ctrl</b> to lock ratio or stretch in one dimension only
          </p>
          <div className="flex h-full w-[86px] flex-col border-l border-[#999] pl-[4px]">
            <div className="flex flex-1 items-center"><span className="w-[21px]">X:</span><span className="font-['DejaVu_Sans_Mono',monospace]">466.67</span></div>
            <div className="flex flex-1 items-center"><span className="w-[21px]">Y:</span><span className="font-['DejaVu_Sans_Mono',monospace]">629.41</span></div>
          </div>
          <label className="flex items-center">
            <span className="w-[13px]">Z:</span>
            <input defaultValue="51%" className="h-[24px] w-[52px] border border-[#aaa] bg-white pl-[10px] text-black" />
          </label>
          <Spin dark />
          <svg width="12" height="12" className="mt-auto mr-[3px] mb-[4px] ml-[8px]">
            <path d="M1 9h2v2H1zM5 9h2v2H5zM9 9h2v2H9zM5 5h2v2H5zM9 5h2v2H9zM9 1h2v2H9z" fill="#c4c4c4" />
          </svg>
        </footer>
      </div>

      <div className={`pointer-events-none absolute inset-0 ${ARIAL}`}>
        <Connectors />
        {LABELS.map(([text, place]) => (
          <span
            key={text}
            className={`absolute flex h-[37px] items-center rounded-[3px] border border-r-2 border-b-2 border-[#999] border-r-[#333] border-b-[#222] bg-linear-to-b from-[#fcfcfc] to-[#e4e4e4] px-[12px] pt-[2px] text-[23px] leading-[28px] whitespace-nowrap ${place}`}
          >
            {text}
          </span>
        ))}
        <Logo />
      </div>
    </div>
  );
}
